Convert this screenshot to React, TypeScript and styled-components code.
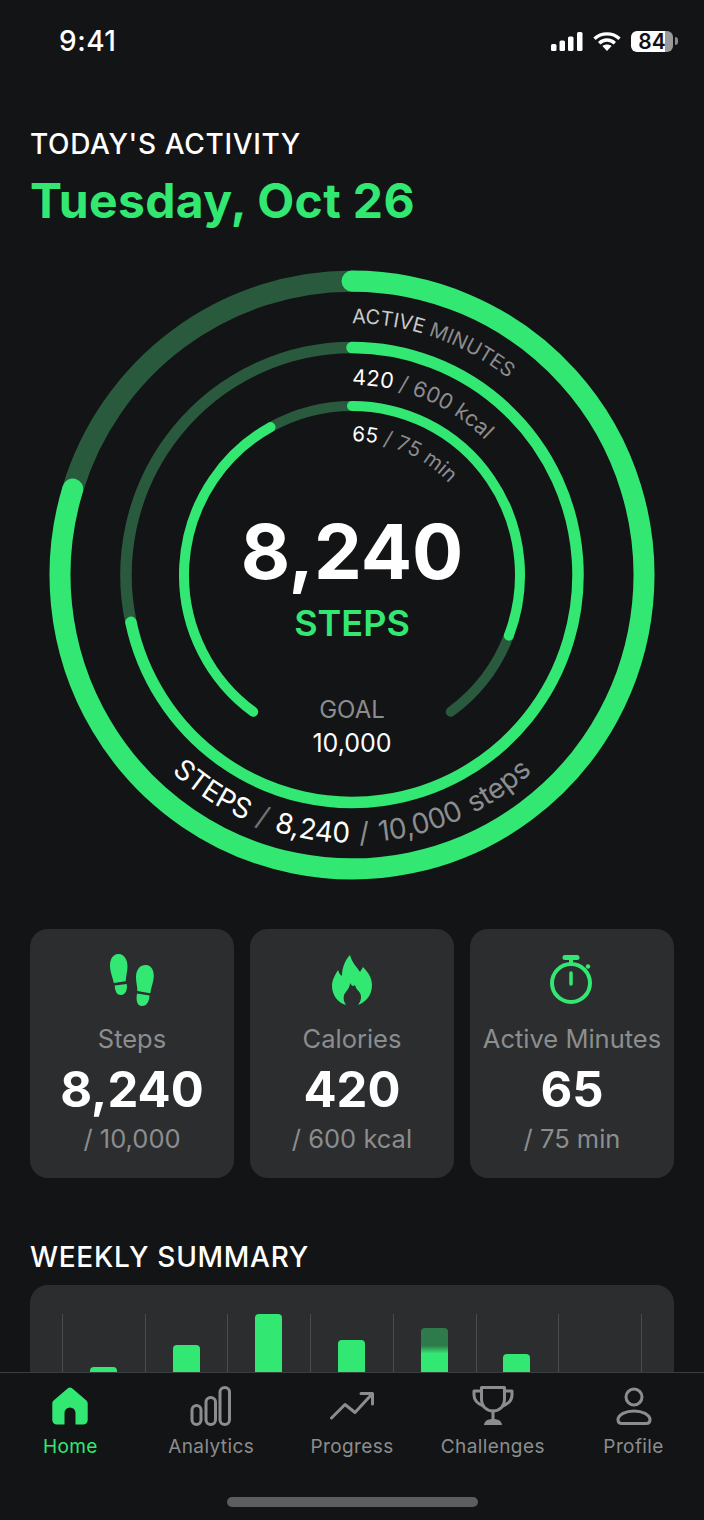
import React from 'react';
import styled, { createGlobalStyle } from 'styled-components';

const GREEN = '#33e872';
const DIM_GREEN = '#2a5a3d';
const GREY = '#8b8d8f';
const FONT = 'Inter, "Liberation Sans", sans-serif';

const CX = 310;
const CY = 310;

// arc on the dial, degrees run clockwise from 12 o'clock
const arcPath = (r: number, from: number, to: number) => {
  const point = (deg: number) => {
    const rad = (deg * Math.PI) / 180;
    return `${(CX + r * Math.sin(rad)).toFixed(2)} ${(CY - r * Math.cos(rad)).toFixed(2)}`;
  };
  const large = to - from > 180 ? 1 : 0;
  return `M ${point(from)} A ${r} ${r} 0 ${large} 1 ${point(to)}`;
};

const smilePath = (r: number) => `M ${CX - r} ${CY} A ${r} ${r} 0 0 0 ${CX + r} ${CY}`;

const rings = [
  { r: 292, width: 21, dim: [[287, 360]], bright: [[0, 287]] },
  { r: 226, width: 11.5, dim: [[258, 360]], bright: [[0, 258]] },
  {
    r: 168,
    width: 10,
    dim: [
      [111, 144],
      [331, 360],
    ],
    bright: [
      [0, 111],
      [216, 331],
    ],
  },
];

const stats = [
  { icon: <StepsIcon />, label: 'Steps', value: '8,240', goal: '/ 10,000' },
  { icon: <FlameIcon />, label: 'Calories', value: '420', goal: '/ 600 kcal' },
  { icon: <TimerIcon />, label: 'Active Minutes', value: '65', goal: '/ 75 min' },
];

const bars = [
  { height: 5 },
  { height: 27 },
  { height: 58 },
  { height: 32 },
  { height: 44, faded: true },
  { height: 18 },
  { height: 0 },
];

const tabs = [
  { icon: <HomeIcon />, label: 'Home', active: true },
  { icon: <AnalyticsIcon />, label: 'Analytics' },
  { icon: <ProgressIcon />, label: 'Progress' },
  { icon: <TrophyIcon />, label: 'Challenges' },
  { icon: <ProfileIcon />, label: 'Profile' },
];

function SignalIcon() {
  return (
    <svg width="32" height="19" viewBox="0 0 32 19" fill="#fff">
      <rect x="0" y="12" width="5.5" height="7" rx="1.5" />
      <rect x="8.5" y="8.5" width="5.5" height="10.5" rx="1.5" />
      <rect x="17" y="4.5" width="5.5" height="14.5" rx="1.5" />
      <rect x="26" y="0" width="5.5" height="19" rx="1.5" />
    </svg>
  );
}

function WifiIcon() {
  return (
    <svg width="28" height="19" viewBox="0 0 28 19" fill="none" stroke="#fff" strokeWidth="3.4">
      <path d="M1.5 6.8C8.5 .2 19.5 .2 26.5 6.8" />
      <path d="M6.2 11.2C10.7 7 17.3 7 21.8 11.2" />
      <path d="M14 19l-4.6-5c2.700-2 6.500-2 9.200 0z" fill="#fff" stroke="none" />
    </svg>
  );
}

function StepsIcon() {
  return (
    <svg width="44" height="52" viewBox="0 0 44 52" fill={GREEN}>
      <path d="M8 0c5.500-.3 9.500 5 9.500 12.500 0 5-1.500 9-1.800 14.700L3.800 29C3 24 .2 19 0 12.500-.2 5 3 .3 8 0z" />
      <path d="M4.700 31.500l12-1.500c.8 5 -.5 11-6 11-4.500 0-5.700-5-6-9.500z" />
      <path d="M36 11c4.500.2 7.800 4 7.800 11 0 6-2.800 11-3.500 17.200l-13-2.300c.2-5-1.400-8.500-1.300-14C26.200 15.500 30 10.800 36 11z" />
      <path d="M27 39.400l12.500 2.100c-.2 5.500-2.500 10.500-7.500 10.500-5.500 0-6-7-5-12.600z" />
    </svg>
  );
}

function FlameIcon() {
  return (
    <svg width="40" height="50" viewBox="0 0 40 50" fill={GREEN}>
      <path d="M18 0C20 8 25 12 28 17C29 15 30 14 31 12C36 17 40 23 40 30C40 40 34 47 26 50C29 46 30 42 28 38C26 35 24 34 23 30C21 32 20 31 18 28C18 33 14 36 12 40C11 44 12 47 14 50C6 48 0 40 0 31C0 25 3 20 6 15C7 18 8 20 10 21C10 13 13 5 18 0Z" />
    </svg>
  );
}

function TimerIcon() {
  return (
    <svg width="44" height="50" viewBox="0 0 44 50" fill="none" stroke={GREEN}>
      <circle cx="21" cy="28" r="19" strokeWidth="4" />
      <path d="M15 2.500H27" strokeWidth="5" strokeLinecap="round" />
      <path d="M21 3V9" strokeWidth="4" />
      <path d="M21 18V29" strokeWidth="3.500" strokeLinecap="round" />
      <circle cx="38" cy="11.500" r="2.200" fill={GREEN} stroke="none" />
    </svg>
  );
}

function HomeIcon() {
  return (
    <svg width="38" height="38" viewBox="0 0 38 38" fill={GREEN}>
      <path d="M19 .5c.8 0 1.500.3 2.100.8l14 12c1 .9 1.600 2.200 1.600 3.600V33c0 2.500-2 4.500-4.500 4.500H24.500V26a5 5 0 0 0-11 0v11.500H5.800C3.300 37.500 1.300 35.500 1.300 33V16.900c0-1.400.6-2.700 1.600-3.600l14-12c.6-.5 1.300-.8 2.100-.8z" />
    </svg>
  );
}

function AnalyticsIcon() {
  return (
    <svg width="42" height="40" viewBox="0 0 42 40" fill="none" stroke={GREY} strokeWidth="3">
      <rect x="2" y="19.500" width="9" height="19" rx="4.500" />
      <rect x="16" y="11.500" width="9.500" height="27" rx="4.700" />
      <rect x="30" y="1.500" width="9.500" height="37" rx="4.700" />
    </svg>
  );
}

function ProgressIcon() {
  return (
    <svg width="44" height="30" viewBox="0 0 44 30" fill="none" stroke={GREY} strokeWidth="3" strokeLinecap="round" strokeLinejoin="round">
      <path d="M1.500 27L15 13.500L25 21.500L42 3" />
      <path d="M31 2.500H42.500V13" />
    </svg>
  );
}

function TrophyIcon() {
  return (
    <svg width="42" height="40" viewBox="0 0 42 40" fill="none" stroke={GREY} strokeWidth="3" strokeLinejoin="round" strokeLinecap="round">
      <path d="M9.500 1.500H32.500V13C32.500 20.500 27.500 25 21 25C14.500 25 9.500 20.500 9.500 13Z" />
      <path d="M9.500 5H2V9C2 14.500 6 18 11.500 20" />
      <path d="M32.500 5H40V9C40 14.500 36 18 30.500 20" />
      <path d="M21 25V33" />
      <path d="M12 39C12.500 35 15.500 33 21 33C26.500 33 29.500 35 30 39Z" fill={GREY} stroke="none" />
    </svg>
  );
}

function ProfileIcon() {
  return (
    <svg width="36" height="38" viewBox="0 0 36 38" fill="none" stroke={GREY} strokeWidth="3">
      <circle cx="18" cy="10" r="8" />
      <path d="M18 24C26 24 34 27.500 34 33C34 35.500 32.500 36.500 30 36.500H6C3.500 36.500 2 35.500 2 33C2 27.500 10 24 18 24Z" />
    </svg>
  );
}

function ActivityRings() {
  return (
    <DialSvg viewBox="0 0 620 620" preserveAspectRatio="none">
      <defs>
        <path id="active-path" d={arcPath(250, 0, 180)} />
        <path id="calories-path" d={arcPath(189, 0, 180)} />
        <path id="minutes-path" d={arcPath(133, 0, 180)} />
        <path id="steps-path" d={smilePath(266)} />
      </defs>
      {rings.map((ring) => (
        <g key={ring.r} fill="none" strokeWidth={ring.width} strokeLinecap="round">
          {ring.dim.map(([from, to]) => (
            <path key={from} d={arcPath(ring.r, from, to)} stroke={DIM_GREEN} />
          ))}
          {ring.bright.map(([from, to]) => (
            <path key={from} d={arcPath(ring.r, from, to)} stroke={GREEN} />
          ))}
        </g>
      ))}
      <RingText $size={20}>
        <textPath href="#active-path">
          <tspan fill="#c9c9c9">ACTIVE </tspan>
          <tspan fill={GREY}>MINUTES</tspan>
        </textPath>
      </RingText>
      <RingText $size={21.5}>
        <textPath href="#calories-path">
          <tspan fill="#fff">420 </tspan>
          <tspan fill={GREY}>/ 600 kcal</tspan>
        </textPath>
      </RingText>
      <RingText $size={20.5}>
        <textPath href="#minutes-path">
          <tspan fill="#fff">65 </tspan>
          <tspan fill={GREY}>/ 75 min</tspan>
        </textPath>
      </RingText>
      <RingText $size={28} $wordGap={2} textAnchor="middle">
        <textPath href="#steps-path" startOffset="50%">
          <tspan fill="#fff">STEPS </tspan>
          <tspan fill="#6f7173">/ </tspan>
          <tspan fill="#fff">8,240 </tspan>
          <tspan fill={GREY}>/ 10,000 steps</tspan>
        </textPath>
      </RingText>
    </DialSvg>
  );
}

export default function App() {
  return (
    <Screen>
      <GlobalStyle />
      <StatusBar>
        <Clock>9:41</Clock>
        <StatusIcons>
          <SignalIcon />
          <WifiIcon />
          <Battery>
            <BatteryBody>84</BatteryBody>
            <BatteryNub />
          </Battery>
        </StatusIcons>
      </StatusBar>

      <Main>
        <Eyebrow>TODAY'S ACTIVITY</Eyebrow>
        <DateTitle>Tuesday, Oct 26</DateTitle>

        <Dial>
          <ActivityRings />
          <DialCentre>
            <BigCount>8,240</BigCount>
            <BigUnit>STEPS</BigUnit>
            <GoalLabel>GOAL</GoalLabel>
            <GoalValue>10,000</GoalValue>
          </DialCentre>
        </Dial>

        <StatGrid>
          {stats.map((stat) => (
            <StatCard key={stat.label}>
              <StatIcon>{stat.icon}</StatIcon>
              <StatLabel>{stat.label}</StatLabel>
              <StatValue>{stat.value}</StatValue>
              <StatGoal>{stat.goal}</StatGoal>
            </StatCard>
          ))}
        </StatGrid>

        <SectionTitle>WEEKLY SUMMARY</SectionTitle>
        <WeeklyCard>
          <Chart>
            {bars.map((bar, i) => (
              <ChartColumn key={i}>
                {bar.height > 0 && <Bar $faded={bar.faded} style={{ height: bar.height }} />}
              </ChartColumn>
            ))}
          </Chart>
        </WeeklyCard>
      </Main>

      <TabBar>
        <TabRow>
          {tabs.map((tab) => (
            <Tab key={tab.label} $active={tab.active}>
              <TabIcon>{tab.icon}</TabIcon>
              {tab.label}
            </Tab>
          ))}
        </TabRow>
        <HomeIndicator />
      </TabBar>
    </Screen>
  );
}

const GlobalStyle = createGlobalStyle`
  html, body {
    margin: 0;
    padding: 0;
    background: #131415;
  }
`;

const Screen = styled.div`
  display: flex;
  flex-direction: column;
  width: 704px;
  height: 1520px;
  overflow: hidden;
  background: #131415;
  color: #fff;
  font-family: ${FONT};
`;

const StatusBar = styled.header`
  display: flex;
  flex: none;
  justify-content: space-between;
  align-items: center;
  height: 82px;
  padding: 0 26px 0 59px;
  box-sizing: border-box;
`;

const Clock = styled.span`
  font-size: 28px;
  font-weight: 500;
  letter-spacing: 0.5px;
`;

const StatusIcons = styled.div`
  display: flex;
  align-items: center;
  gap: 10px;
`;

const Battery = styled.div`
  display: flex;
  align-items: center;
  gap: 2px;
`;

const BatteryBody = styled.div`
  width: 42px;
  height: 21px;
  border-radius: 6px;
  background: linear-gradient(90deg, #fff 82%, #9a9a9a 82%);
  color: #111;
  font-size: 21px;
  font-weight: 600;
  line-height: 21px;
  text-align: center;
`;

const BatteryNub = styled.div`
  width: 3px;
  height: 8px;
  border-radius: 0 3px 3px 0;
  background: #8a8a8a;
`;

const Main = styled.main`
  flex: 1;
  min-height: 0;
  padding: 45px 30px 0;
  overflow: hidden;
`;

const Eyebrow = styled.div`
  font-size: 28px;
  line-height: 34px;
  font-weight: 500;
  letter-spacing: 0.65px;
`;

const DateTitle = styled.h1`
  margin: 11px 0 0;
  color: ${GREEN};
  font-size: 48px;
  line-height: 58px;
  font-weight: 700;
  letter-spacing: 0.35px;
`;

const Dial = styled.section`
  display: grid;
  justify-content: center;
  margin-top: 33px;
`;

const DialSvg = styled.svg`
  display: block;
  grid-area: 1 / 1;
  width: 620px;
  height: 624px;
`;

const RingText = styled.text<{ $size: number; $wordGap?: number }>`
  font-family: ${FONT};
  font-size: ${({ $size }) => $size}px;
  word-spacing: ${({ $wordGap }) => $wordGap ?? 0}px;
`;

const DialCentre = styled.div`
  display: flex;
  grid-area: 1 / 1;
  flex-direction: column;
  align-items: center;
  padding-top: 242px;
`;

const BigCount = styled.div`
  font-size: 76px;
  line-height: 92px;
  font-weight: 700;
`;

const BigUnit = styled.div`
  margin-top: 6px;
  color: ${GREEN};
  font-size: 36px;
  line-height: 40px;
  font-weight: 600;
`;

const GoalLabel = styled.div`
  margin-top: 52px;
  color: ${GREY};
  font-size: 24px;
  line-height: 30px;
`;

const GoalValue = styled.div`
  margin-top: 2px;
  font-size: 25px;
  line-height: 32px;
`;

const StatGrid = styled.section`
  display: grid;
  grid-template-columns: repeat(3, 1fr);
  gap: 16px;
  margin-top: 42px;
`;

const StatCard = styled.article`
  display: flex;
  flex-direction: column;
  align-items: center;
  height: 249px;
  padding-top: 24px;
  box-sizing: border-box;
  border-radius: 18px;
  background: #2b2d2f;
`;

const StatIcon = styled.div`
  display: flex;
  align-items: center;
  height: 54px;

  svg {
    display: block;
  }
`;

const StatLabel = styled.div`
  margin-top: 16px;
  color: ${GREY};
  font-size: 25.5px;
  line-height: 32px;
  white-space: nowrap;
`;

const StatValue = styled.div`
  margin: 6px 0 4px;
  font-size: 49px;
  line-height: 58px;
  font-weight: 700;
`;

const StatGoal = styled(StatLabel)`
  margin-top: 0;
`;

const SectionTitle = styled.h2`
  margin: 62px 0 0;
  font-size: 28px;
  line-height: 35px;
  font-weight: 500;
  letter-spacing: 0.7px;
`;

const WeeklyCard = styled.section`
  margin-top: 10px;
  padding: 29px 32px 40px;
  border-radius: 18px;
  background: #2b2d2f;
`;

const Chart = styled.div`
  display: grid;
  grid-template-columns: repeat(7, 1fr);
  height: 58px;
  border-right: 1px solid #4a4c4e;
`;

const ChartColumn = styled.div`
  display: flex;
  justify-content: center;
  align-items: flex-end;
  padding-right: 1px;
  border-left: 1px solid #4a4c4e;
`;

const Bar = styled.div<{ $faded?: boolean }>`
  width: 27px;
  border-radius: 4px 4px 0 0;
  background: ${({ $faded }) =>
    $faded ? `linear-gradient(#2f7a4b 40%, ${GREEN} 58%)` : GREEN};
`;

const TabBar = styled.nav`
  flex: none;
  height: 148px;
  box-sizing: border-box;
  border-top: 1px solid #3c3e40;
  background: #131415;
`;

const TabRow = styled.div`
  display: grid;
  grid-template-columns: repeat(5, 1fr);
  padding-top: 13px;
`;

const Tab = styled.div<{ $active?: boolean }>`
  display: flex;
  flex-direction: column;
  align-items: center;
  color: ${({ $active }) => ($active ? GREEN : GREY)};
  font-size: 19px;
  line-height: 24px;
  letter-spacing: 0.4px;
`;

const TabIcon = styled.div`
  display: flex;
  justify-content: center;
  align-items: center;
  height: 40px;
  margin-bottom: 9px;

  svg {
    display: block;
  }
`;

const HomeIndicator = styled.div`
  width: 251px;
  height: 10px;
  margin: 38px auto 0;
  border-radius: 5px;
  background: #5c5d5e;
`;
